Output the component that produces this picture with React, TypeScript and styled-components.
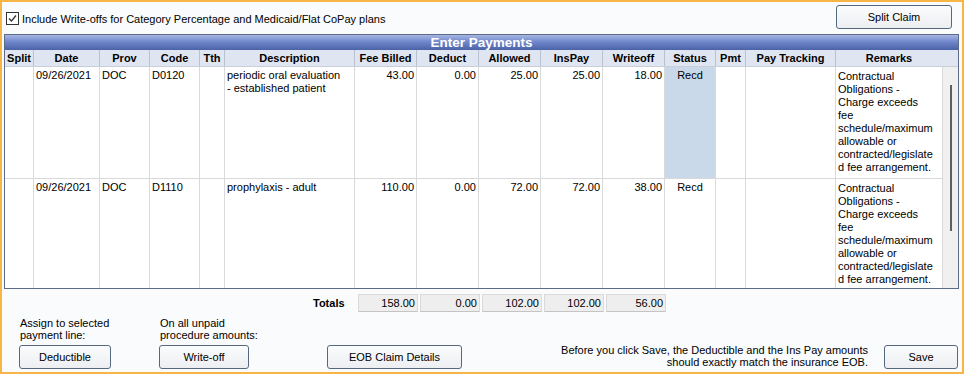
import React from "react";
import styled, { createGlobalStyle } from "styled-components";

const GlobalStyle = createGlobalStyle`
  html, body {
    margin: 0;
    padding: 0;
    background: #ffffff;
  }
  body {
    font-family: "Liberation Sans", Arial, sans-serif;
    font-size: 11px;
    color: #000;
  }
`;

const COLS = "29px 66px 50px 50px 25px 130px 62px 62px 62px 62px 62px 51px 30px 90px 106px";

const Window = styled.div`
  width: 964px;
  height: 374px;
  box-sizing: border-box;
  border: 2px solid #f6b545;
  background: #f9fbfd;
  display: flex;
  flex-direction: column;
  padding: 3px 3px 0 2px;
`;

const TopBar = styled.div`
  display: flex;
  align-items: center;
  justify-content: space-between;
  height: 24px;
  padding-left: 2px;
  padding-right: 7px;
`;

const CheckLabel = styled.label`
  display: flex;
  align-items: center;
  gap: 3px;
  margin-top: 3px;
`;

const Button = styled.button<{ $w: number }>`
  width: ${(p) => p.$w}px;
  height: 24px;
  box-sizing: border-box;
  border: 1px solid #56687f;
  border-radius: 3px;
  background: linear-gradient(#fbfcfd, #eceef1);
  font-family: "Liberation Sans", Arial, sans-serif;
  font-size: 11px;
  color: #000;
  padding: 0;
  cursor: pointer;
`;

const Grid = styled.div`
  margin-top: 5px;
  width: 955px;
  height: 255px;
  box-sizing: border-box;
  border: 1px solid #5b6b88;
  background: #fff;
  display: flex;
  flex-direction: column;
`;

const TitleBar = styled.div`
  height: 15px;
  background: linear-gradient(#a7b6e3, #7087cb 45%, #4a62a6);
  color: #fff;
  font-weight: bold;
  font-size: 13.5px;
  text-align: center;
  line-height: 15px;
`;

const HeaderRow = styled.div`
  display: grid;
  grid-template-columns: ${COLS} 16px;
  height: 16px;
  background: #dfe6f1;
  border-bottom: 1px solid #c9cfd9;
`;

const HeadCell = styled.div<{ $last?: boolean }>`
  font-weight: bold;
  font-size: 11px;
  text-align: center;
  line-height: 16px;
  white-space: nowrap;
  overflow: hidden;
  ${(p) => (p.$last ? "" : "border-right: 1px solid #b9c2d0;")}
`;

const Body = styled.div`
  flex: 1;
  display: flex;
  min-height: 0;
`;

const Rows = styled.div`
  flex: 1;
  display: flex;
  flex-direction: column;
`;

const Row = styled.div<{ $h: number }>`
  display: grid;
  grid-template-columns: ${COLS};
  height: ${(p) => p.$h}px;
  border-bottom: 1px solid #d9d9d9;
  &:last-child {
    border-bottom: none;
  }
`;

const Cell = styled.div<{ $align?: string; $sel?: boolean }>`
  border-right: 1px solid #d9d9d9;
  padding: 2px 2px 0 2px;
  line-height: 13px;
  text-align: ${(p) => p.$align || "left"};
  background: ${(p) => (p.$sel ? "#c9d9ea" : "transparent")};
  overflow: hidden;
  white-space: nowrap;
`;

const RemarkCell = styled(Cell)`
  border-right: none;
  padding-top: 3px;
`;

const ScrollBar = styled.div`
  width: 16px;
  background: #f0f0f0;
  border-left: 1px solid #d9d9d9;
  display: flex;
  justify-content: center;
  padding-top: 18px;
  box-sizing: border-box;
`;

const Thumb = styled.div`
  width: 2px;
  height: 146px;
  background: #606060;
  margin-left: 1px;
`;

const TotalsRow = styled.div`
  display: flex;
  align-items: center;
  height: 19px;
  margin-top: 4px;
  padding-left: 309px;
`;

const TotalsLabel = styled.div`
  font-weight: bold;
  width: 45px;
`;

const TotalBox = styled.div`
  width: 60px;
  height: 18px;
  box-sizing: border-box;
  margin-right: 2px;
  background: #eeeeee;
  border: 1px solid #dadada;
  border-bottom-color: #c4c4c4;
  text-align: right;
  line-height: 16px;
  padding-right: 2px;
`;

const Footer = styled.div`
  display: flex;
  align-items: flex-end;
  padding: 0 1px 0 15px;
  margin-top: 5px;
`;

const Group = styled.div<{ $w: number }>`
  width: ${(p) => p.$w}px;
  display: flex;
  flex-direction: column;
  align-items: flex-start;
`;

const Caption = styled.div`
  line-height: 12px;
  margin-bottom: 4px;
  padding-left: 1px;
`;

const Note = styled.div`
  margin-left: auto;
  text-align: right;
  line-height: 12px;
  margin-right: 16px;
  margin-bottom: 1px;
`;

const remarks = [
  "Contractual",
  "Obligations -",
  "Charge exceeds",
  "fee",
  "schedule/maximum",
  "allowable or",
  "contracted/legislate",
  "d fee arrangement.",
];

const lines = [
  {
    date: "09/26/2021",
    prov: "DOC",
    code: "D0120",
    desc: ["periodic oral evaluation", "- established patient"],
    fee: "43.00",
    deduct: "0.00",
    allowed: "25.00",
    ins: "25.00",
    wo: "18.00",
    sel: true,
  },
  {
    date: "09/26/2021",
    prov: "DOC",
    code: "D1110",
    desc: ["prophylaxis - adult"],
    fee: "110.00",
    deduct: "0.00",
    allowed: "72.00",
    ins: "72.00",
    wo: "38.00",
    sel: false,
  },
];

const headers = [
  "Split", "Date", "Prov", "Code", "Tth", "Description", "Fee Billed", "Deduct",
  "Allowed", "InsPay", "Writeoff", "Status", "Pmt", "Pay Tracking", "Remarks", "",
];

const CheckBox = () => (
  <svg width="13" height="13" viewBox="0 0 13 13">
    <rect x="0.5" y="0.5" width="12" height="12" fill="#fff" stroke="#333" />
    <path d="M3 6.5 L5.5 9 L10 3.5" fill="none" stroke="#333" strokeWidth="1.3" />
  </svg>
);

export default function App() {
  return (
    <>
      <GlobalStyle />
      <Window>
        <TopBar>
          <CheckLabel>
            <CheckBox />
            Include Write-offs for Category Percentage and Medicaid/Flat CoPay plans
          </CheckLabel>
          <Button $w={116}>Split Claim</Button>
        </TopBar>
        <Grid>
          <TitleBar>Enter Payments</TitleBar>
          <HeaderRow>
            {headers.map((h, i) => (
              <HeadCell key={i} $last={i >= headers.length - 2}>
                {h}
              </HeadCell>
            ))}
          </HeaderRow>
          <Body>
            <Rows>
              {lines.map((l, i) => (
                <Row key={i} $h={i === 0 ? 112 : 111}>
                  <Cell />
                  <Cell>{l.date}</Cell>
                  <Cell>{l.prov}</Cell>
                  <Cell>{l.code}</Cell>
                  <Cell />
                  <Cell>
                    {l.desc.map((d) => (
                      <div key={d}>{d}</div>
                    ))}
                  </Cell>
                  <Cell $align="right">{l.fee}</Cell>
                  <Cell $align="right">{l.deduct}</Cell>
                  <Cell $align="right">{l.allowed}</Cell>
                  <Cell $align="right">{l.ins}</Cell>
                  <Cell $align="right">{l.wo}</Cell>
                  <Cell $align="center" $sel={l.sel}>Recd</Cell>
                  <Cell />
                  <Cell />
                  <RemarkCell>
                    {remarks.map((r) => (
                      <div key={r}>{r}</div>
                    ))}
                  </RemarkCell>
                </Row>
              ))}
            </Rows>
            <ScrollBar>
              <Thumb />
            </ScrollBar>
          </Body>
        </Grid>
        <TotalsRow>
          <TotalsLabel>Totals</TotalsLabel>
          {["158.00", "0.00", "102.00", "102.00", "56.00"].map((t, i) => (
            <TotalBox key={i}>{t}</TotalBox>
          ))}
        </TotalsRow>
        <Footer>
          <Group $w={140}>
            <Caption>
              Assign to selected
              <br />
              payment line:
            </Caption>
            <Button $w={92}>Deductible</Button>
          </Group>
          <Group $w={168}>
            <Caption>
              On all unpaid
              <br />
              procedure amounts:
            </Caption>
            <Button $w={90}>Write-off</Button>
          </Group>
          <Group $w={140}>
            <Button $w={135}>EOB Claim Details</Button>
          </Group>
          <Note>
            Before you click Save, the Deductible and the Ins Pay amounts
            <br />
            should exactly match the insurance EOB.
          </Note>
          <Button $w={74}>Save</Button>
        </Footer>
      </Window>
    </>
  );
}
